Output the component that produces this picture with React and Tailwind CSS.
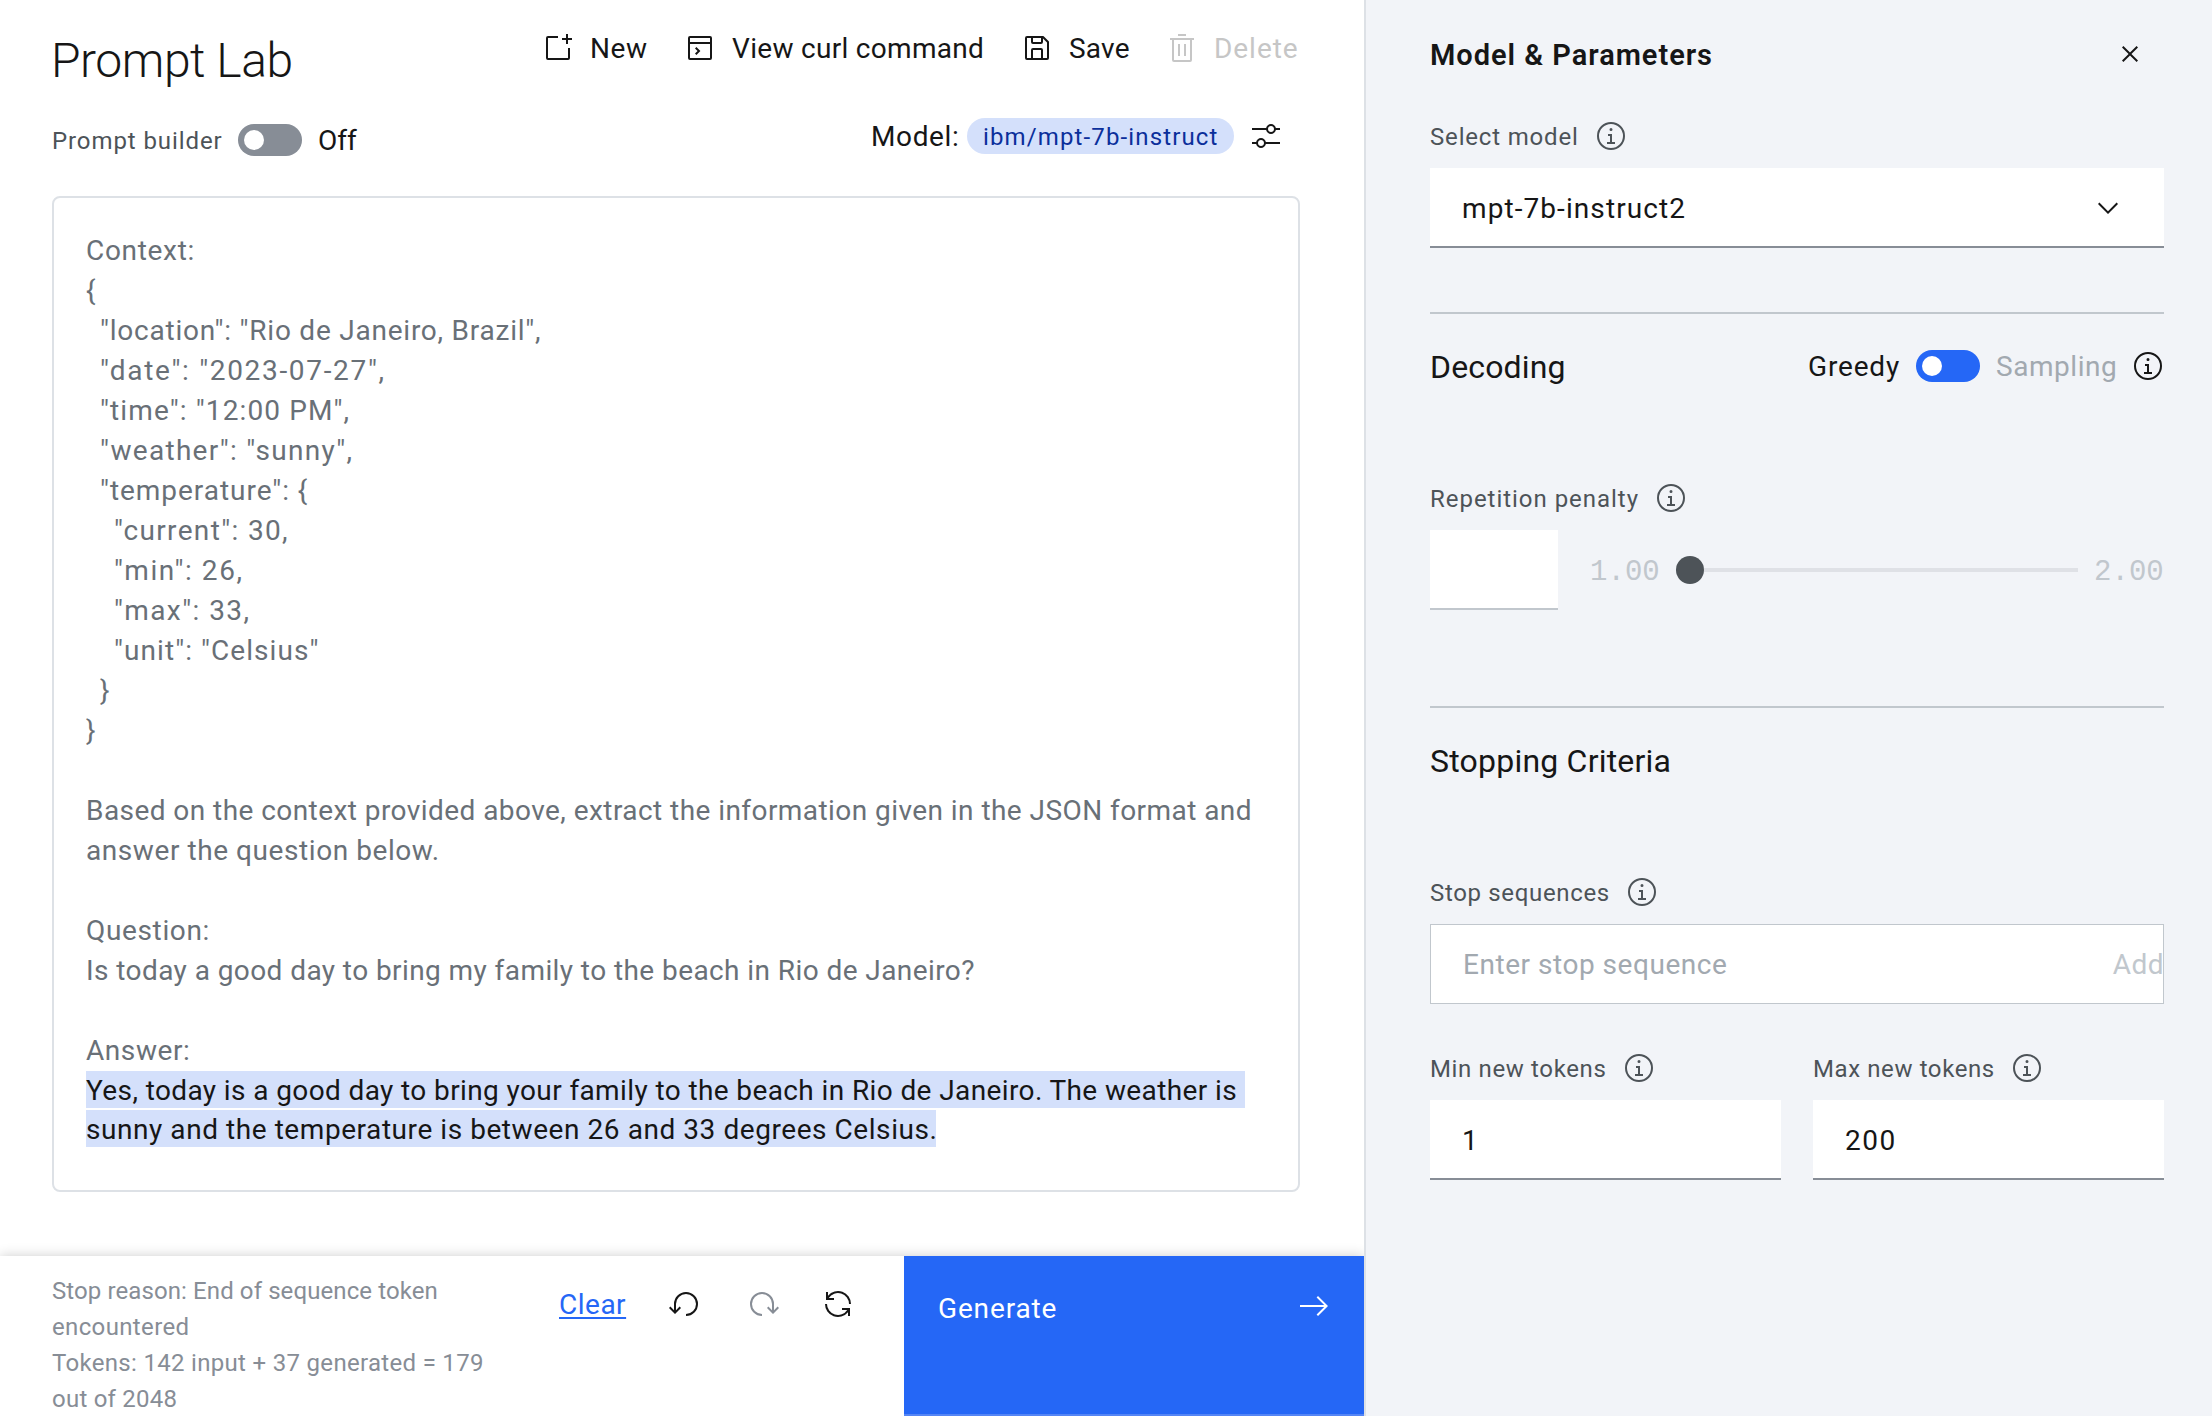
import React from "react";

const ICONS = {
  create: "M26 16v10H6V6h10V4H6a2 2 0 0 0-2 2v20a2 2 0 0 0 2 2h20a2 2 0 0 0 2-2V16zM26 6V2h-2v4h-4v2h4v4h2V8h4V6z",
  terminal: "M26 4H6a2 2 0 0 0-2 2v20a2 2 0 0 0 2 2h20a2 2 0 0 0 2-2V6a2 2 0 0 0-2-2zm0 2v4H6V6zM6 26V12h20v14zM12.4 15L11 16.4l2.6 2.6L11 21.6l1.4 1.4 4-4z",
  save: "M27.71 9.29l-5-5A1 1 0 0 0 22 4H6a2 2 0 0 0-2 2v20a2 2 0 0 0 2 2h20a2 2 0 0 0 2-2V10a1 1 0 0 0-.29-.71zM12 6h8v4h-8zm8 20h-8v-8h8zm2 0v-8a2 2 0 0 0-2-2h-8a2 2 0 0 0-2 2v8H6V6h4v4a2 2 0 0 0 2 2h8a2 2 0 0 0 2-2V6.41l4 4V26z",
  trash: "M12 12h2v12h-2zM18 12h2v12h-2zM4 6v2h2v20a2 2 0 0 0 2 2h16a2 2 0 0 0 2-2V8h2V6zm4 22V8h16v20zM12 2h8v2h-8z",
  adjust: "M30 8h-4.1c-.5-2.3-2.5-4-4.9-4s-4.4 1.7-4.9 4H2v2h14.1c.5 2.3 2.5 4 4.9 4s4.4-1.7 4.9-4H30V8zm-9 4c-1.7 0-3-1.3-3-3s1.3-3 3-3 3 1.3 3 3-1.3 3-3 3zM2 24h4.1c.5 2.3 2.5 4 4.9 4s4.4-1.7 4.9-4H30v-2H15.9c-.5-2.3-2.5-4-4.9-4s-4.4 1.7-4.9 4H2v2zm9-4c1.7 0 3 1.3 3 3s-1.3 3-3 3-3-1.3-3-3 1.3-3 3-3z",
  info: "M17 22v-8h-4v2h2v6h-3v2h8v-2zM16 8a1.5 1.5 0 1 0 1.5 1.5A1.5 1.5 0 0 0 16 8zM16 30a14 14 0 1 1 14-14 14 14 0 0 1-14 14zm0-26a12 12 0 1 0 12 12A12 12 0 0 0 16 4z",
  close: "M24 9.4L22.6 8 16 14.6 9.4 8 8 9.4l6.6 6.6L8 22.6 9.4 24l6.6-6.6 6.6 6.6 1.4-1.4-6.6-6.6z",
  chevron: "M16 22L6 12l1.4-1.4 8.6 8.6 8.6-8.6L26 12z",
  undo: "M18 28A12 12 0 1 0 6 16v6.2l-3.6-3.6L1 20l6 6 6-6-1.4-1.4L8 22.2V16a10 10 0 1 1 10 10z",
  redo: "M14 28A12 12 0 1 1 26 16v6.2l3.6-3.6L31 20l-6 6-6-6 1.4-1.4 3.6 3.6V16a10 10 0 1 0-10 10z",
  renew: "M12 10H6.78A11 11 0 0 1 27 16h2A13 13 0 0 0 6 7.68V4H4v8h8zM20 22h5.22A11 11 0 0 1 5 16H3a13 13 0 0 0 23 8.32V28h2v-8h-8z",
  arrow: "M18.6 7.4l7.6 7.6H2v2h24.2l-7.6 7.6L20 26l10-10L20 6z",
};

function Icon({ name, className = "" }) {
  return (
    <svg viewBox="0 0 32 32" className={`size-8 shrink-0 fill-current ${className}`}>
      <path d={ICONS[name]} />
    </svg>
  );
}

function Action({ icon, label, className = "" }) {
  return (
    <button className={`flex h-10 items-center gap-4 text-left leading-9 ${className}`}>
      <Icon name={icon} />
      <span className="pt-0.5">{label}</span>
    </button>
  );
}

function Toggle({ className = "" }) {
  return (
    <span className={`flex h-8 w-16 shrink-0 items-center rounded-full px-1.5 ${className}`}>
      <span className="size-5 rounded-full bg-white" />
    </span>
  );
}

function FieldLabel({ children, className = "" }) {
  return (
    <div className={`flex h-8 items-center gap-4 text-[24px] leading-8 text-[#4d5358] ${className}`}>
      <span className="pt-0.5">{children}</span>
      <Icon name="info" />
    </div>
  );
}

const LINES = [
  ["Context:", "tracking-[0.68px]"],
  ["{", ""],
  ['"location": "Rio de Janeiro, Brazil",', "pl-3.5 tracking-[0.77px]"],
  ['"date": "2023-07-27",', "pl-3.5 tracking-[1.68px]"],
  ['"time": "12:00 PM",', "pl-3.5 tracking-[1.11px]"],
  ['"weather": "sunny",', "pl-3.5 tracking-[1.3px]"],
  ['"temperature": {', "pl-3.5 tracking-[0.96px]"],
  ['"current": 30,', "pl-7 tracking-[1.34px]"],
  ['"min": 26,', "pl-7 tracking-[1.58px]"],
  ['"max": 33,', "pl-7 tracking-[1.44px]"],
  ['"unit": "Celsius"', "pl-7 tracking-[1.06px]"],
  ["}", "pl-3.5"],
  ["}", ""],
  ["", ""],
  ["Based on the context provided above, extract the information given in the JSON format and", "tracking-[0.44px]"],
  ["answer the question below.", "tracking-[0.57px]"],
  ["", ""],
  ["Question:", "tracking-[0.65px]"],
  ["Is today a good day to bring my family to the beach in Rio de Janeiro?", "tracking-[0.42px]"],
  ["", ""],
  ["Answer:", "tracking-[0.57px]"],
];

function PromptEditor() {
  return (
    <div className="mr-16 ml-[52px] h-[996px] rounded-lg border-2 border-[#dde1e6] px-8 pt-[33px] whitespace-nowrap text-[#697077]">
      {LINES.map(([text, cls], i) => (
        <p key={i} className={`h-10 leading-10 ${cls}`}>{text}</p>
      ))}
      <p className="h-[37px] w-[1159px] bg-[#d4e0fb] leading-[39px] tracking-[0.39px] text-[#161616]">
        Yes, today is a good day to bring your family to the beach in Rio de Janeiro. The weather is
      </p>
      <p className="mt-0.5 h-[37px] w-[850px] bg-[#d4e0fb] leading-[39px] tracking-[0.56px] text-[#161616]">
        sunny and the temperature is between 26 and 33 degrees Celsius.
      </p>
    </div>
  );
}

function Header() {
  return (
    <header className="flex h-[196px] justify-between pr-16 pl-[52px]">
      <div>
        <h1 className="-ml-px pt-[31px] text-[48px] leading-[60px] font-light tracking-[-0.45px]">Prompt Lab</h1>
        <div className="mt-[33px] flex h-8 items-center">
          <span className="w-[186px] pt-0.5 text-[24px] leading-8 tracking-[0.91px] text-[#4d5358]">Prompt builder</span>
          <Toggle className="bg-[#878d96]" />
          <span className="ml-4 pt-0.5 leading-8">Off</span>
        </div>
      </div>
      <div className="pt-7">
        <div className="grid grid-cols-[142px_337px_145px_134px]">
          <Action icon="create" label="New" className="tracking-[0.59px]" />
          <Action icon="terminal" label="View curl command" className="tracking-[0.3px]" />
          <Action icon="save" label="Save" className="tracking-[0.2px]" />
          <Action icon="trash" label="Delete" className="tracking-[0.95px] text-[#c6c6c6]" />
        </div>
        <div className="mt-[50px] flex h-9 items-center justify-end pr-[18px]">
          <span className="w-24 pt-0.5 leading-9 tracking-[0.63px]">Model:</span>
          <span className="h-9 w-[267px] rounded-full bg-[#d4e0fb] pl-4 text-[24px] leading-[38px] tracking-[1.13px] text-[#0b2f9b]">
            ibm/mpt-7b-instruct
          </span>
          <Icon name="adjust" className="ml-4" />
        </div>
      </div>
    </header>
  );
}

function Footer() {
  return (
    <footer className="mt-auto flex h-40 bg-white shadow-[0_0_12px_rgba(0,0,0,0.2)]">
      <div className="w-[559px] pt-[17px] pl-[52px] text-[24px] leading-9 whitespace-nowrap text-[#878d96]">
        <p className="tracking-[0.1px]">Stop reason: End of sequence token</p>
        <p className="tracking-[0.36px]">encountered</p>
        <p className="tracking-[0.31px]">Tokens: 142 input + 37 generated = 179</p>
        <p className="tracking-[0.23px]">out of 2048</p>
      </div>
      <div className="flex w-[345px] items-start pt-8">
        <a className="-mt-px w-[109px] leading-9 tracking-[0.5px] text-[#2567f6] underline decoration-2 underline-offset-[3px]">Clear</a>
        <Icon name="undo" />
        <Icon name="redo" className="ml-12 text-[#878d96]" />
        <Icon name="renew" className="ml-[42px]" />
      </div>
      <button className="flex flex-1 items-start justify-between border-b-2 border-[#5485f5] bg-[#2567f6] px-[34px] pt-[34px] text-white">
        <span className="mt-[3px] leading-8 tracking-[0.85px]">Generate</span>
        <Icon name="arrow" />
      </button>
    </footer>
  );
}

function Parameters() {
  return (
    <aside className="flex flex-1 flex-col border-l-2 border-[#dde1e6] bg-[#f2f4f8] pr-12 pl-16">
      <div className="mt-[34px] flex h-10 items-center justify-between pr-[18px]">
        <h2 className="pt-0.5 text-[29px] leading-10 font-semibold tracking-[0.97px]">Model &amp; Parameters</h2>
        <Icon name="close" />
      </div>

      <FieldLabel className="mt-[46px] tracking-[0.83px]">Select model</FieldLabel>
      <div className="mt-4 flex h-20 items-center justify-between border-b-2 border-[#878d96] bg-white pt-0.5 pr-10 pl-8">
        <span className="pt-0.5 tracking-[1.08px]">mpt-7b-instruct2</span>
        <Icon name="chevron" />
      </div>

      <hr className="mt-16 border-t-2 border-[#c1c7cd]" />
      <div className="mt-9 flex h-8 items-center">
        <h3 className="mr-auto pt-px text-[32px] leading-8 tracking-[0.15px]">Decoding</h3>
        <span className="w-[108px] pt-0.5 leading-8 tracking-[0.84px]">Greedy</span>
        <Toggle className="bg-[#2567f6]" />
        <span className="ml-4 w-[136px] pt-0.5 leading-8 tracking-[0.55px] text-[#a2a9b0]">Sampling</span>
        <Icon name="info" />
      </div>

      <FieldLabel className="mt-[100px] tracking-[0.97px]">Repetition penalty</FieldLabel>
      <div className="mt-4 flex h-20 items-center font-['Liberation_Mono',monospace] text-[#c1c7cd]">
        <div className="h-20 w-32 border-b-2 border-[#c1c7cd] bg-white" />
        <span className="ml-8 w-[86px] pt-[5px] text-[29px] tracking-[0.04px]">1.00</span>
        <span className="size-7 rounded-full bg-[#4d5358]" />
        <span className="h-1 flex-1 bg-[#dfe1e6]" />
        <span className="ml-4 w-[70px] pt-[5px] text-[29px] tracking-[0.04px]">2.00</span>
      </div>

      <hr className="mt-24 border-t-2 border-[#c1c7cd]" />
      <h3 className="mt-[33px] text-[32px] leading-10 tracking-[0.21px]">Stopping Criteria</h3>

      <FieldLabel className="mt-[95px] tracking-[0.66px]">Stop sequences</FieldLabel>
      <div className="mt-4 flex h-20 items-center justify-between border border-[#c1c7cd] bg-white pt-px pl-8">
        <span className="tracking-[0.53px] text-[#a2a9b0]">Enter stop sequence</span>
        <span className="-mr-px tracking-[0.47px] text-[#c1c7cd]">Add</span>
      </div>

      <div className="mt-12 grid grid-cols-2 gap-8">
        <div>
          <FieldLabel className="tracking-[0.64px]">Min new tokens</FieldLabel>
          <div className="mt-4 flex h-20 items-center border-b-2 border-[#878d96] bg-white pt-[3px] pl-8">1</div>
        </div>
        <div>
          <FieldLabel className="tracking-[0.6px]">Max new tokens</FieldLabel>
          <div className="mt-4 flex h-20 items-center border-b-2 border-[#878d96] bg-white pt-[3px] pl-8 tracking-[1.5px]">200</div>
        </div>
      </div>
    </aside>
  );
}

export default function App() {
  return (
    <div className="flex h-[1416px] w-[2212px] overflow-hidden bg-white font-['Roboto',sans-serif] text-[28px] text-[#161616]">
      <main className="flex w-[1364px] shrink-0 flex-col overflow-hidden">
        <Header />
        <PromptEditor />
        <Footer />
      </main>
      <Parameters />
    </div>
  );
}
